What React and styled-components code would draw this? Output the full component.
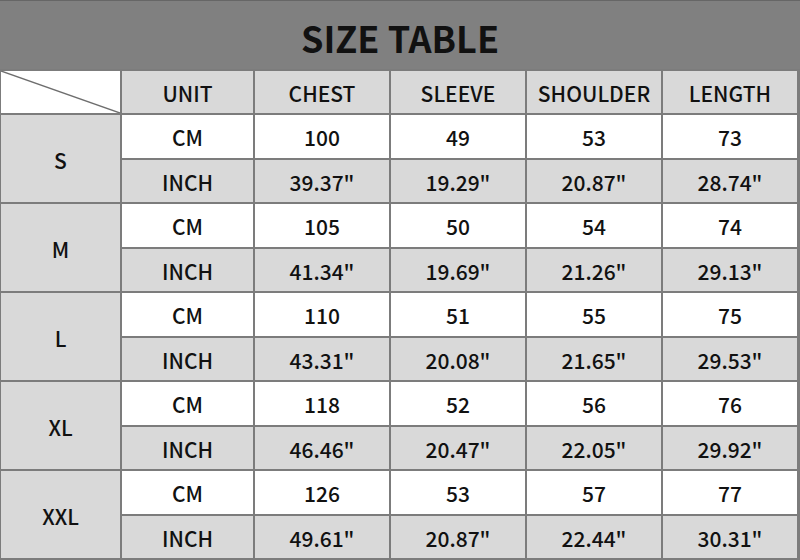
import React from "react";
import styled, { createGlobalStyle } from "styled-components";

const GlobalStyle = createGlobalStyle`
  html, body {
    margin: 0;
    padding: 0;
    background: #ffffff;
  }
  body {
    font-family: "Liberation Sans", Arial, sans-serif;
  }
`;

const sizes = [
  { size: "S", cm: ["100", "49", "53", "73"], inch: ["39.37\"", "19.29\"", "20.87\"", "28.74\""] },
  { size: "M", cm: ["105", "50", "54", "74"], inch: ["41.34\"", "19.69\"", "21.26\"", "29.13\""] },
  { size: "L", cm: ["110", "51", "55", "75"], inch: ["43.31\"", "20.08\"", "21.65\"", "29.53\""] },
  { size: "XL", cm: ["118", "52", "56", "76"], inch: ["46.46\"", "20.47\"", "22.05\"", "29.92\""] },
  { size: "XXL", cm: ["126", "53", "57", "77"], inch: ["49.61\"", "20.87\"", "22.44\"", "30.31\""] },
];

const headers = ["UNIT", "CHEST", "SLEEVE", "SHOULDER", "LENGTH"];

const SizeTable = () => {
  return (
    <Wrapper>
      <GlobalStyle />
      <Title>SIZE TABLE</Title>
      <Grid>
        <Corner>
          <svg width="100%" height="100%" viewBox="0 0 100 100" preserveAspectRatio="none">
            <line x1="0" y1="0" x2="100" y2="100" stroke="#6e6e6e" strokeWidth="1.4" vectorEffect="non-scaling-stroke" />
          </svg>
        </Corner>
        {headers.map((h) => (
          <Cell key={h} $shade>
            {h}
          </Cell>
        ))}
        {sizes.map((row) => (
          <React.Fragment key={row.size}>
            <SizeCell>{row.size}</SizeCell>
            <Cell>CM</Cell>
            {row.cm.map((v, i) => (
              <Cell key={"cm" + i}>{v}</Cell>
            ))}
            <Cell $shade>INCH</Cell>
            {row.inch.map((v, i) => (
              <Cell key={"in" + i} $shade>
                {v}
              </Cell>
            ))}
          </React.Fragment>
        ))}
      </Grid>
    </Wrapper>
  );
};

const Wrapper = styled.div`
  width: 800px;
  height: 560px;
  background: #7c7c7c;
  display: flex;
  flex-direction: column;
  overflow: hidden;
`;

const Title = styled.div`
  height: 69px;
  flex-shrink: 0;
  background: #808080;
  border-top: 1px solid #666;
  box-sizing: border-box;
  display: flex;
  align-items: center;
  justify-content: center;
  font-family: "Noto Sans CJK SC", "Liberation Sans", sans-serif;
  font-weight: 700;
  font-size: 36px;
  color: #111;
  padding-top: 4px;
`;

const Grid = styled.div`
  display: grid;
  grid-template-columns: 119px 131px 134px 134px 134px 134px;
  grid-template-rows: 42px repeat(10, 42.5px);
  gap: 2px;
  padding: 2px 2px 1px 1px;
  background: #7c7c7c;
`;

const Cell = styled.div`
  background: ${(p) => (p.$shade ? "#d9d9d9" : "#ffffff")};
  display: flex;
  align-items: center;
  justify-content: center;
  font-family: "Noto Sans CJK SC", "Liberation Sans", sans-serif;
  font-weight: 500;
  font-size: 21px;
  color: #111;
  padding-top: 2px;
  box-sizing: border-box;
`;

const SizeCell = styled(Cell)`
  grid-row: span 2;
  background: #d9d9d9;
`;

const Corner = styled.div`
  background: #ffffff;
  overflow: hidden;
  svg {
    display: block;
  }
`;

export default SizeTable;
